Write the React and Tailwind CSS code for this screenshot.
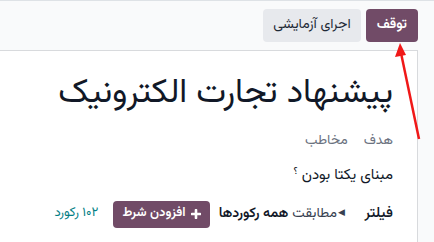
import React from "react";

// ── Arrow annotation drawn over the screenshot ──────────────────────────────
const RedArrow = () => (
  <svg className="absolute left-0 top-0 pointer-events-none" width="434" height="242" viewBox="0 0 434 242">
    <line x1="401" y1="52" x2="419" y2="138" stroke="#f01818" strokeWidth="2.5" />
    <polygon points="400,42 395,56 406,54" fill="#f01818" />
  </svg>
);

const PlusIcon = () => (
  <svg className="w-[10px] h-[10px]" viewBox="0 0 10 10">
    <path d="M5 1v8M1 5h8" stroke="currentColor" strokeWidth="2.6" strokeLinecap="round" />
  </svg>
);

const App = () => {
  return (
    <div
      dir="rtl"
      className="relative w-[434px] h-[242px] overflow-hidden bg-[#f9fafb] border-t border-[#dee2e6] font-['Vazirmatn',sans-serif]"
    >
      {/* ── Top buttons ── */}
      <div className="flex gap-[5px] pr-4 pt-[8px]">
        <button className="h-[33px] px-[11px] rounded bg-[#714b67] text-white text-[14px] font-semibold">
          توقف
        </button>
        <button className="h-[33px] px-[10px] rounded bg-[#e7e9ed] text-[#1f2937] text-[14px]">
          اجرای آزمایشی
        </button>
      </div>

      {/* ── Form card ── */}
      <div className="mt-[8px] mr-4 -ml-2 bg-white border border-[#d8dadd] h-[200px] pr-6 pt-[19px]">
        <h1 className="text-[34px] leading-[48px] text-[#111827]">پیشنهاد تجارت الکترونیک</h1>

        <div className="flex gap-4 mt-[13px] text-[14px] text-[#6b7280]">
          <span>هدف</span>
          <span>مخاطب</span>
        </div>

        <p className="mt-[13px] text-[15px] text-[#111827]">
          مبنای یکتا بودن <sup className="text-[10px]">؟</sup>
        </p>

        <div className="flex items-center mt-[13px] text-[14px]">
          <span className="font-medium text-[15px] text-[#111827] w-[48px]">فیلتر</span>
          <span className="flex items-center text-[#374151]">
            <span className="text-[9px] ml-[1px]">◀</span>
            مطابقت <span className="font-semibold text-[#111827] mr-1">همه رکوردها</span>
          </span>
          <button className="mr-[9px] h-[27px] px-[9px] rounded bg-[#714b67] text-white text-[13px] font-semibold flex items-center gap-[5px]">
            <PlusIcon />
            افزودن شرط
          </button>
          <span className="mr-[15px] text-[13px] text-[#017e84]">۱۰۲ رکورد</span>
        </div>
      </div>

      <RedArrow />
    </div>
  );
};

export default App;
